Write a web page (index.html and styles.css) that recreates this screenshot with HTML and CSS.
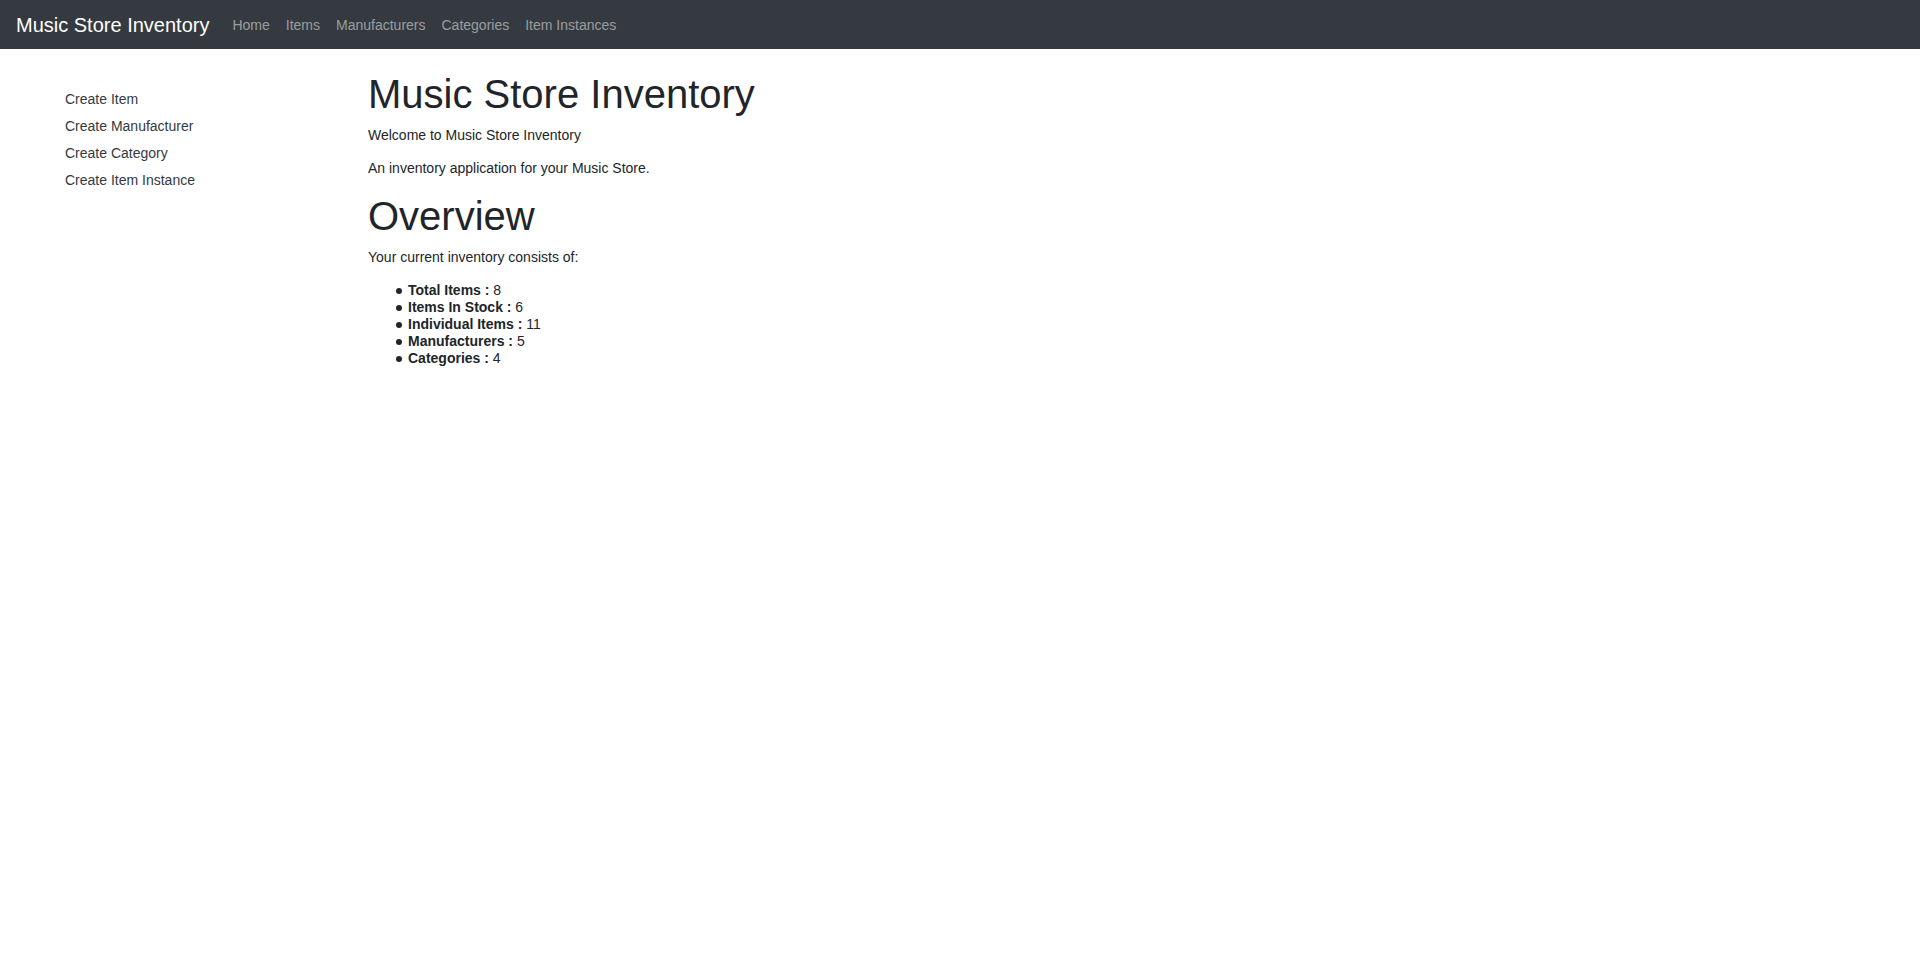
FILE: index.html
```html
<!DOCTYPE html>
<html lang="en">
<head>
<meta charset="utf-8">
<title>Music Store Inventory</title>
<link rel="stylesheet" href="styles.css">
</head>
<body>
<nav class="navbar">
  <a class="navbar-brand" href="#">Music Store Inventory</a>
  <ul class="navbar-nav">
    <li><a class="nav-link" href="#">Home</a></li>
    <li><a class="nav-link" href="#">Items</a></li>
    <li><a class="nav-link" href="#">Manufacturers</a></li>
    <li><a class="nav-link" href="#">Categories</a></li>
    <li><a class="nav-link" href="#">Item Instances</a></li>
  </ul>
</nav>
<div class="layout">
  <aside class="sidebar">
    <ul class="sidebar-nav">
      <li><a href="#">Create Item</a></li>
      <li><a href="#">Create Manufacturer</a></li>
      <li><a href="#">Create Category</a></li>
      <li><a href="#">Create Item Instance</a></li>
    </ul>
  </aside>
  <main class="content">
    <h1>Music Store Inventory</h1>
    <p>Welcome to Music Store Inventory</p>
    <p>An inventory application for your Music Store.</p>
    <h1>Overview</h1>
    <p>Your current inventory consists of:</p>
    <ul class="totals">
      <li><strong>Total Items :</strong> 8</li>
      <li><strong>Items In Stock :</strong> 6</li>
      <li><strong>Individual Items :</strong> 11</li>
      <li><strong>Manufacturers :</strong> 5</li>
      <li><strong>Categories :</strong> 4</li>
    </ul>
  </main>
</div>
</body>
</html>
```
FILE: styles.css
```css
* { box-sizing: border-box; }
body {
  margin: 0;
  background: #fff;
  color: #212529;
  font: 14px/17px "Liberation Sans", Arial, sans-serif;
}
a { text-decoration: none; }
.navbar {
  display: flex;
  align-items: center;
  padding: 9px 16px 7px;
  background: #343a40;
}
.navbar-brand {
  margin-right: 15px;
  color: #fff;
  font-size: 20px;
  line-height: 33px;
}
.navbar-nav {
  display: flex;
  margin: 0;
  padding: 0;
  list-style: none;
}
.nav-link {
  display: block;
  padding: 8px;
  color: rgba(255, 255, 255, 0.5);
}
.layout {
  display: grid;
  grid-template-columns: 1fr 5fr;
}
.sidebar { padding: 37px 15px 0; }
.sidebar-nav {
  margin: 0;
  padding-left: 50px;
  list-style: none;
}
.sidebar-nav a {
  display: block;
  padding: 5px 0;
  color: #343a40;
}
.content { padding: 22px 15px 0 48px; }
h1 {
  margin: 0 0 10px;
  font-size: 40px;
  font-weight: 400;
  line-height: 46px;
}
p { margin: 0 0 16px; }
.totals {
  margin: 0;
  padding-left: 40px;
  list-style: none;
}
.totals li::before {
  content: "";
  display: inline-block;
  width: 6px;
  height: 6px;
  margin: 0 6px 0 -12px;
  border-radius: 50%;
  background: #212529;
  vertical-align: middle;
}
```
